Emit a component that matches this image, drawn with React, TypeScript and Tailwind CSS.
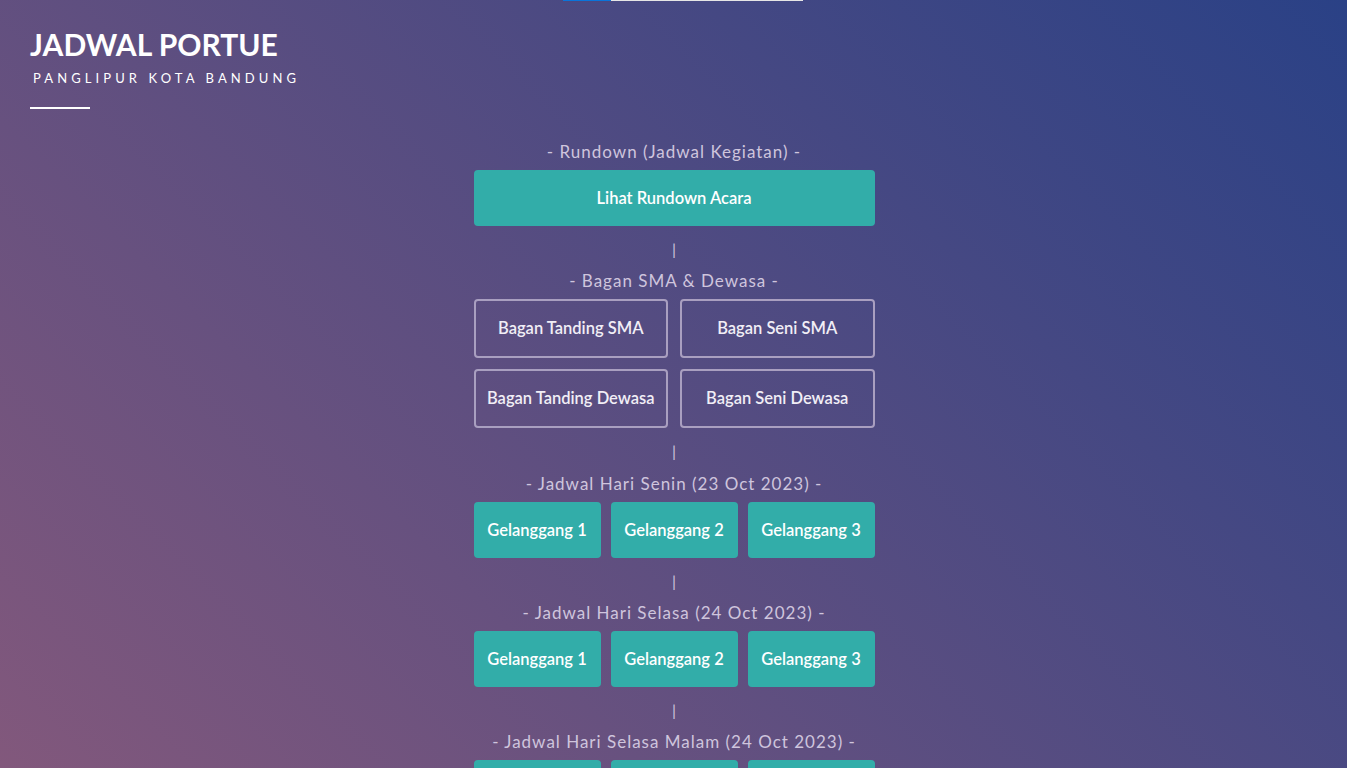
import React from 'react';

const days = [
  'Jadwal Hari Senin (23 Oct 2023)',
  'Jadwal Hari Selasa (24 Oct 2023)',
  'Jadwal Hari Selasa Malam (24 Oct 2023)',
];

const bagan = ['Bagan Tanding SMA', 'Bagan Seni SMA', 'Bagan Tanding Dewasa', 'Bagan Seni Dewasa'];

function Label({ children }: { children: React.ReactNode }) {
  return (
    <div className="mb-[6px] text-center text-[17px] leading-[24px] tracking-[1px] text-[#cfc5dd]">
      - {children} -
    </div>
  );
}

function Pipe() {
  return <div className="mt-[11px] mb-[8px] text-[16px] leading-[24px] text-[#cfc5dd]">|</div>;
}

export default function App() {
  return (
    <div className="relative h-screen overflow-y-auto bg-[linear-gradient(45deg,#82587c,#2a4186)] font-['Lato',sans-serif] text-white">
      {/* loading bar */}
      <div className="absolute left-[563px] top-0 flex h-px w-[240px]">
        <div className="w-[48px] bg-[#0a74da]" />
        <div className="flex-1 bg-[#e6e6e6]" />
      </div>

      <header className="px-[30px] pt-[26px]">
        <h1 className="text-[30px] font-bold leading-[36px]">JADWAL PORTUE</h1>
        <p className="ml-[3px] mt-[7px] text-[13px] leading-[18px] tracking-[4.1px]">PANGLIPUR KOTA BANDUNG</p>
        <div className="mt-[20px] h-[2px] w-[60px] bg-white" />
      </header>

      <div className="flex justify-center pl-[1px]">
        <main className="flex w-[401px] flex-col items-center pt-[31px] pb-10">
          <Label>Rundown (Jadwal Kegiatan)</Label>
          <button className="h-[56px] w-full rounded-[4px] bg-[#32ada9] text-[16.5px] font-semibold">
            Lihat Rundown Acara
          </button>
          <Pipe />

          <Label>Bagan SMA &amp; Dewasa</Label>
          <div className="grid w-full grid-cols-2 gap-x-[12px] gap-y-[11px]">
            {bagan.map((b) => (
              <button
                key={b}
                className="h-[59px] rounded-[4px] border-2 border-[#a99fc0] text-[16.5px] font-semibold text-[#f1eef6]"
              >
                {b}
              </button>
            ))}
          </div>

          {days.map((d, i) => (
            <React.Fragment key={d}>
              <Pipe />
              <div className={i === 0 ? 'pt-px' : ''}>
                <Label>{d}</Label>
              </div>
              <div className="grid w-full grid-cols-3 gap-[10px]">
                {[1, 2, 3].map((n) => (
                  <button key={n} className="h-[56px] rounded-[4px] bg-[#32ada9] text-[16.5px] font-semibold">
                    Gelanggang {n}
                  </button>
                ))}
              </div>
            </React.Fragment>
          ))}
        </main>
      </div>
    </div>
  );
}
